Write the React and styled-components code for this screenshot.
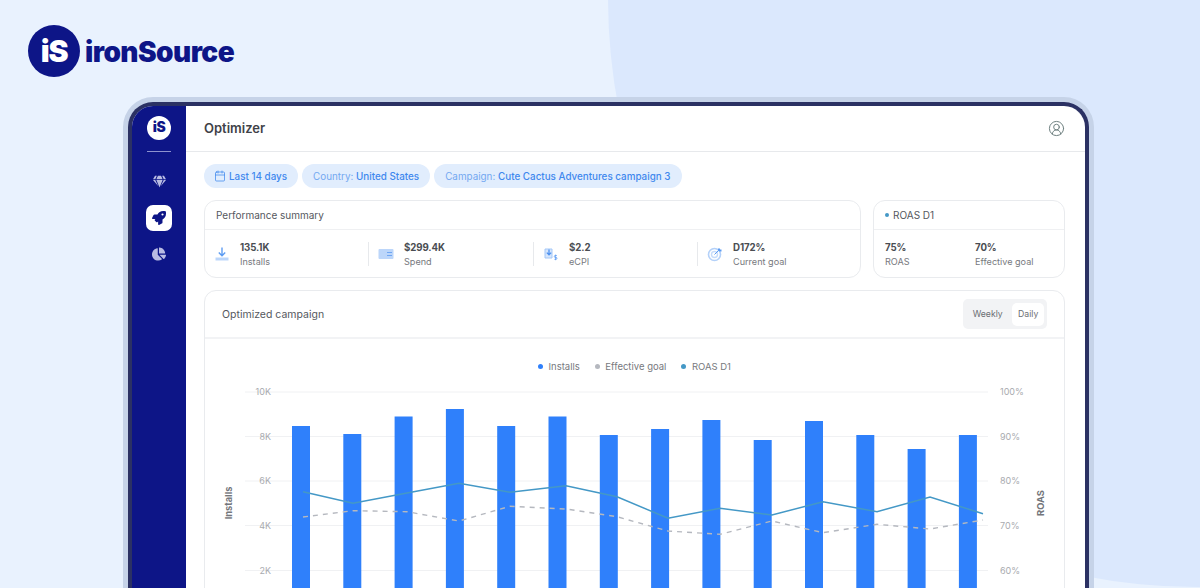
import React from 'react';
import styled, { createGlobalStyle } from 'styled-components';
import { FaChartPie, FaGem, FaRocket } from 'react-icons/fa';
import { Calendar, CircleUserRound } from 'lucide-react';

const GlobalStyle = createGlobalStyle`
  html, body {
    margin: 0;
    padding: 0;
    height: 100%;
    overflow: hidden;
    background: #e9f2fe;
    font-family: Inter, "Liberation Sans", sans-serif;
  }
`;

const Page = styled.div`
  position: relative;
  width: 1200px;
  height: 588px;
  overflow: hidden;
  background: #e9f2fe;
`;

const BackdropCircle = styled.div`
  position: absolute;
  left: 608px;
  top: -592px;
  width: 1179px;
  height: 1179px;
  border-radius: 50%;
  background: #dbe8fd;
`;

const Content = styled.div`
  position: relative;
  padding: 25px 0 0 28px;
`;

const Brand = styled.div`
  display: flex;
  align-items: center;
  gap: 5px;
  height: 52px;
`;

const BrandMark = styled.div`
  display: flex;
  align-items: center;
  justify-content: center;
  width: ${p => p.$size}px;
  height: ${p => p.$size}px;
  border-radius: 50%;
  background: ${p => (p.$inverted ? '#fff' : '#0d1587')};
  color: ${p => (p.$inverted ? '#0d1587' : '#fff')};
  font-size: ${p => p.$size * 0.58}px;
  font-weight: 900;
  letter-spacing: -0.04em;
  line-height: 1;
`;

const BrandName = styled.div`
  padding-top: 1px;
  color: #0d1587;
  font-size: 28px;
  font-weight: 900;
  letter-spacing: -0.02em;
`;

const DeviceRing = styled.div`
  width: 971px;
  height: 520px;
  margin: 20px 0 0 95px;
  padding: 5px 5px 0;
  box-sizing: border-box;
  border-radius: 30px 30px 0 0;
  background: #c6d3e8;
`;

const Device = styled.div`
  display: flex;
  height: 100%;
  box-sizing: border-box;
  overflow: hidden;
  border: 4px solid #2b3163;
  border-bottom: 0;
  border-radius: 25px 25px 0 0;
  background: #fff;
`;

const Sidebar = styled.nav`
  display: flex;
  flex-direction: column;
  align-items: center;
  flex: 0 0 54px;
  padding-top: 10px;
  background: #0d1587;
`;

const SideDivider = styled.div`
  width: 24px;
  height: 1px;
  margin: 11px 0 16px;
  background: #8d92cf;
`;

const SideItem = styled.div`
  display: flex;
  align-items: center;
  justify-content: center;
  width: 26px;
  height: 26px;
  margin-bottom: ${p => p.$gap}px;
  border-radius: 7px;
  background: ${p => (p.$active ? '#fff' : 'transparent')};
  color: ${p => (p.$active ? '#0d1587' : '#b9bce3')};
`;

const Main = styled.main`
  flex: 1;
  min-width: 0;
`;

const Header = styled.header`
  display: flex;
  align-items: center;
  justify-content: space-between;
  height: 45px;
  padding: 0 20px 0 18px;
  border-bottom: 1px solid #e7e9ec;
`;

const Title = styled.h1`
  margin: 0 0 1px;
  color: #3f4248;
  font-size: 13px;
  font-weight: 600;
`;

const Body = styled.div`
  display: flex;
  flex-direction: column;
  gap: 12px;
  padding: 12px 20px 0 18px;
`;

const Chips = styled.div`
  display: flex;
  gap: 4px;
`;

const Chip = styled.div`
  display: flex;
  align-items: center;
  height: 24px;
  padding: 0 11px 0 ${p => (p.$iconed ? 10 : 11)}px;
  border-radius: 12px;
  background: #e1edfd;
  color: #73a8f1;
  font-size: 9.85px;
  white-space: pre;
  strong {
    color: #3f88ee;
    font-weight: 500;
  }
  svg {
    margin-right: 3px;
  }
`;

const CardRow = styled.div`
  display: flex;
  gap: 12px;
  height: 78px;
`;

const Card = styled.section`
  flex: ${p => p.$flex || 'none'};
  width: ${p => (p.$width ? `${p.$width}px` : 'auto')};
  box-sizing: border-box;
  border: 1px solid #e9ebee;
  border-radius: 12px;
  background: #fff;
`;

const CardHeader = styled.div`
  display: flex;
  align-items: center;
  gap: 4px;
  height: 29px;
  box-sizing: border-box;
  padding: 0 11px 1px;
  border-bottom: 1px solid #eff0f2;
  color: #55585e;
  font-size: 10px;
`;

const Dot = styled.span`
  flex: none;
  width: ${p => p.$size || 4}px;
  height: ${p => p.$size || 4}px;
  border-radius: 50%;
  background: ${p => p.$color};
`;

const Metrics = styled.div`
  display: flex;
  align-items: center;
  height: 47px;
`;

const Metric = styled.div`
  display: flex;
  align-items: center;
  gap: 10px;
  box-sizing: border-box;
  width: ${p => p.$width}px;
  height: 24px;
  padding-left: ${p => p.$pad || 9}px;
  border-left: ${p => (p.$divider ? '1px solid #e7e9ec' : '0')};
`;

const MetricIcon = styled.svg`
  flex: none;
  width: 16px;
  height: 16px;
  color: #8ab6f5;
`;

const MetricText = styled.div`
  display: flex;
  flex-direction: column;
  gap: 3px;
  margin-top: 2px;
  line-height: 11px;
`;

const MetricValue = styled.div`
  color: #4a4d52;
  font-size: 9.7px;
  font-weight: 700;
  letter-spacing: -0.01em;
`;

const MetricLabel = styled.div`
  color: #77797e;
  font-size: 9.1px;
`;

const ChartCard = styled(Card)`
  height: 320px;
`;

const ChartHeader = styled.div`
  display: flex;
  align-items: center;
  justify-content: space-between;
  height: 46px;
  padding: 0 17px;
  border-bottom: 2px solid #f2f3f5;
  color: #55585e;
  font-size: 10.5px;
`;

const Toggle = styled.div`
  display: flex;
  align-items: center;
  justify-content: flex-end;
  gap: 3px;
  width: 84px;
  height: 30px;
  box-sizing: border-box;
  padding: 0 3px;
  border-radius: 5px;
  background: #f2f3f5;
`;

const ToggleItem = styled.div`
  display: flex;
  align-items: center;
  justify-content: center;
  width: ${p => p.$width}px;
  height: 23px;
  border-radius: 5px;
  background: ${p => (p.$active ? '#fff' : 'transparent')};
  color: #6b6e73;
  font-size: 8.7px;
`;

const Legend = styled.div`
  display: flex;
  justify-content: center;
  gap: 15px;
  margin: 20px 0 7px;
  height: 14px;
`;

const LegendItem = styled.div`
  display: flex;
  align-items: center;
  gap: 5.5px;
  color: #77797e;
  font-size: 9.5px;
`;

const Plot = styled.svg`
  display: block;
  width: 858px;
  height: 240px;
`;

const Tick = styled.text`
  fill: #a9abaf;
  font-size: 9px;
  font-family: Inter, "Liberation Sans", sans-serif;
`;

const AxisTitle = styled.text`
  fill: #74767b;
  font-size: 9.3px;
  font-weight: 700;
  font-family: Inter, "Liberation Sans", sans-serif;
`;

const barTops = [426, 434, 416.5, 409, 426, 416.5, 435, 429, 420, 440, 421, 435, 449, 435];
const roasLine = '303,491.7 353,503.3 407,493 459,483.3 510,492.3 566,485.7 617,496.7 668,518.3 720,508.3 772,515 823,501.7 877,511.7 930,497 983,513.7';
const goalLine = '303,517 353,510.7 407,511.7 459,521 510,506.3 566,509 617,516.7 668,531 720,534.3 772,521 823,532.7 877,524.3 930,529 983,520';
const gridRows = [
  { y: 392, left: '10K', right: '100%' },
  { y: 436.5, left: '8K', right: '90%' },
  { y: 481, left: '6K', right: '80%' },
  { y: 525.5, left: '4K', right: '70%' },
  { y: 570.5, left: '2K', right: '60%' }
];

const DownloadIcon = () => (
  <MetricIcon viewBox="0 0 16 16" fill="none" stroke="currentColor">
    <path d="M8 1.5v8M4.8 6.6 8 9.8l3.2-3.2" strokeWidth="1.4" stroke="#5d9cf2" />
    <path d="M1.5 11.5h13v3h-13z" fill="#bcd6fa" stroke="none" />
  </MetricIcon>
);

const SpendIcon = () => (
  <MetricIcon viewBox="0 0 16 16" fill="none">
    <rect x="0.5" y="3" width="15" height="10" rx="1" fill="#bcd6fa" />
    <path d="M9 6.5h5M9 9.5h5" stroke="#6fa6f3" strokeWidth="1" />
  </MetricIcon>
);

const CpiIcon = () => (
  <MetricIcon viewBox="0 0 16 16" fill="none">
    <path d="M2 3h7v9H2z" fill="#d6e6fc" stroke="#a5c8f8" />
    <path d="M6 3.5v5M3.8 6.6 6 8.8l2.2-2.2" stroke="#4f93f0" strokeWidth="1.3" />
    <path d="M13.8 9.5h-1.6a.9.9 0 0 0 0 1.9h.8a.9.9 0 0 1 0 1.9h-1.6M12.6 8.6v5.6" stroke="#5d9cf2" strokeWidth=".8" />
  </MetricIcon>
);

const GoalIcon = () => (
  <MetricIcon viewBox="0 0 16 16" fill="none">
    <circle cx="7.5" cy="8.5" r="6" stroke="#b4d1f9" strokeWidth="1.6" />
    <circle cx="7.5" cy="8.5" r="3" stroke="#c6dcfb" strokeWidth="1.4" />
    <path d="M7.5 8.5 12 4" stroke="#5d9cf2" strokeWidth="1" />
    <path d="M11 2.5h2v1h1.5v2H12.5L11 4.500z" fill="#5d9cf2" />
  </MetricIcon>
);

const Chart = () => (
  <Plot viewBox="205 380 858 240">
    {gridRows.map(row => (
      <g key={row.y}>
        <line x1="245" x2="988" y1={row.y} y2={row.y} stroke="#f0f1f3" />
        <Tick x="271" y={row.y + 3} textAnchor="end">{row.left}</Tick>
        <Tick x="1000" y={row.y + 3}>{row.right}</Tick>
      </g>
    ))}
    {barTops.map((top, i) => (
      <rect key={i} x={292 + i * 51.3} y={top} width="18" height={620 - top} fill="#2f80fb" />
    ))}
    <polyline points={goalLine} fill="none" stroke="#b5b8bf" strokeWidth="1.4" strokeDasharray="5 5" />
    <polyline points={roasLine} fill="none" stroke="#4498c6" strokeWidth="1.5" />
    <AxisTitle transform="translate(232 503) rotate(-90)" textAnchor="middle">Installs</AxisTitle>
    <AxisTitle transform="translate(1044 503) rotate(-90)" textAnchor="middle">ROAS</AxisTitle>
  </Plot>
);

const App = () => (
  <Page>
    <GlobalStyle />
    <BackdropCircle />
    <Content>
      <Brand>
        <BrandMark $size={52}>iS</BrandMark>
        <BrandName>ironSource</BrandName>
      </Brand>
      <DeviceRing>
        <Device>
          <Sidebar>
            <BrandMark $size={24} $inverted>iS</BrandMark>
            <SideDivider />
            <SideItem $gap={11}><FaGem size={13} /></SideItem>
            <SideItem $active $gap={10}><FaRocket size={14} /></SideItem>
            <SideItem $gap={0}><FaChartPie size={14} /></SideItem>
          </Sidebar>
          <Main>
            <Header>
              <Title>Optimizer</Title>
              <CircleUserRound size={17} color="#6d8080" strokeWidth={1.4} />
            </Header>
            <Body>
              <Chips>
                <Chip $iconed>
                  <Calendar size={12} color="#3f88ee" strokeWidth={1.5} />
                  <strong>Last 14 days</strong>
                </Chip>
                <Chip>Country: <strong>United States</strong></Chip>
                <Chip>Campaign: <strong>Cute Cactus Adventures campaign 3</strong></Chip>
              </Chips>
              <CardRow>
                <Card $flex="1">
                  <CardHeader>Performance summary</CardHeader>
                  <Metrics>
                    <Metric $width={163}>
                      <DownloadIcon />
                      <MetricText><MetricValue>135.1K</MetricValue><MetricLabel>Installs</MetricLabel></MetricText>
                    </Metric>
                    <Metric $width={165} $divider>
                      <SpendIcon />
                      <MetricText><MetricValue>$299.4K</MetricValue><MetricLabel>Spend</MetricLabel></MetricText>
                    </Metric>
                    <Metric $width={164} $divider>
                      <CpiIcon />
                      <MetricText><MetricValue>$2.2</MetricValue><MetricLabel>eCPI</MetricLabel></MetricText>
                    </Metric>
                    <Metric $width={160} $divider>
                      <GoalIcon />
                      <MetricText><MetricValue>D172%</MetricValue><MetricLabel>Current goal</MetricLabel></MetricText>
                    </Metric>
                  </Metrics>
                </Card>
                <Card $width={192}>
                  <CardHeader><Dot $color="#4498c6" />ROAS D1</CardHeader>
                  <Metrics>
                    <Metric $width={90} $pad={11}>
                      <MetricText><MetricValue>75%</MetricValue><MetricLabel>ROAS</MetricLabel></MetricText>
                    </Metric>
                    <Metric $width={100} $pad={11}>
                      <MetricText><MetricValue>70%</MetricValue><MetricLabel>Effective goal</MetricLabel></MetricText>
                    </Metric>
                  </Metrics>
                </Card>
              </CardRow>
              <ChartCard>
                <ChartHeader>
                  Optimized campaign
                  <Toggle>
                    <ToggleItem $width={44}>Weekly</ToggleItem>
                    <ToggleItem $width={32} $active>Daily</ToggleItem>
                  </Toggle>
                </ChartHeader>
                <Legend>
                  <LegendItem><Dot $size={5} $color="#2f80fb" />Installs</LegendItem>
                  <LegendItem><Dot $size={5} $color="#b5b8bf" />Effective goal</LegendItem>
                  <LegendItem><Dot $size={5} $color="#4498c6" />ROAS D1</LegendItem>
                </Legend>
                <Chart />
              </ChartCard>
            </Body>
          </Main>
        </Device>
      </DeviceRing>
    </Content>
  </Page>
);

export default App;
